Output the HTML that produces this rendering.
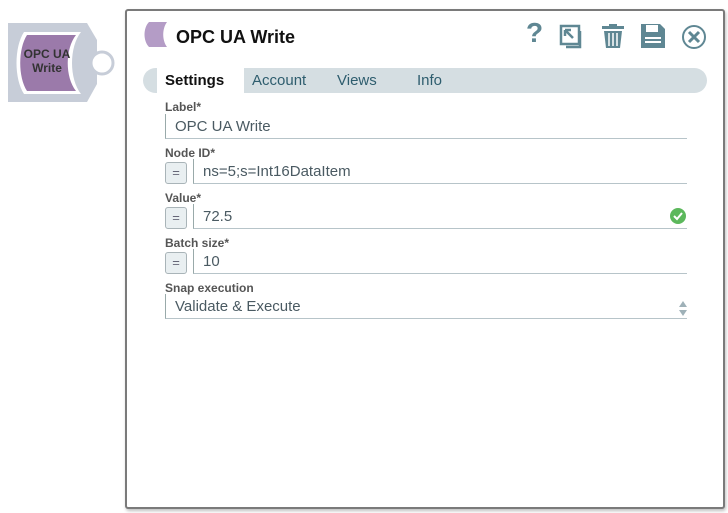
<!DOCTYPE html>
<html><head><meta charset="utf-8"><style>
body{margin:0;width:728px;height:513px;background:#fff;font-family:"Liberation Sans",sans-serif;position:relative;overflow:hidden}
.abs{position:absolute}
.panel{left:125px;top:9px;width:596px;height:496px;border:2px solid #7a7a7a;border-radius:3px;box-shadow:1px 2px 3px rgba(0,0,0,.25);background:#fff}
.lbl{position:absolute;left:165px;font-size:12px;font-weight:bold;color:#555}
.inp{position:absolute;border-left:1px solid #9aa;border-bottom:1px solid #b7c4c9;font-size:15px;color:#4a5a62;padding-left:9px;box-sizing:border-box;height:25px;line-height:25px}
.eq{position:absolute;left:165px;width:22px;height:22px;border:1px solid #a9b4b8;border-radius:3px;background:#e9eff1;box-sizing:border-box;color:#667;font-size:13px;text-align:center;line-height:19px}
.tab{position:absolute;top:72px;font-size:15px;color:#2e5d6e}
</style></head><body>
<svg class="abs" style="left:7px;top:22px" width="110" height="82">
<polygon points="1,1 80,1 90,18 90,62 80,80 1,80" fill="#c7cdd8"/>
<path d="M17,10 H74 C62,25 62,57 74,72 H17 C7,57 7,25 17,10Z" fill="#fff"/>
<path d="M20,13 H69 C58,27 58,55 69,69 H20 C11,55 11,27 20,13Z" fill="#9b7aaa"/>
<circle cx="95" cy="41" r="11" fill="#fff" stroke="#c7cdd8" stroke-width="3"/>
<text x="40" y="36" font-size="12" font-weight="bold" text-anchor="middle" fill="#333" font-family="Liberation Sans">OPC UA</text>
<text x="40" y="50" font-size="12" font-weight="bold" text-anchor="middle" fill="#333" font-family="Liberation Sans">Write</text>
</svg>
<div class="abs panel"></div>
<svg class="abs" style="left:143px;top:21px" width="26" height="27"><path d="M6,1 H24 C19,8 19,19 24,26 H6 C0,20 0,7 6,1Z" fill="#b49cc6"/></svg>
<div class="abs" style="left:176px;top:27px;font-size:18px;font-weight:bold;color:#111">OPC UA Write</div>
<div class="abs" style="left:526px;top:17px;font-size:28px;font-weight:bold;color:#5f8793">?</div>
<svg class="abs" style="left:558px;top:23px" width="28" height="28" fill="none" stroke="#5f8793" stroke-width="2.5"><rect x="3" y="3" width="18" height="18"/><path d="M22,8 V24 H8"/><path d="M7,7 L15,15 M7,7 H13 M7,7 V13"/></svg>
<svg class="abs" style="left:600px;top:23px" width="26" height="26" fill="#5f8793"><rect x="2" y="3" width="22" height="3"/><rect x="9" y="1" width="8" height="3"/><path d="M4,8 H22 L20,25 H6Z"/><path d="M9,10 V23 M13,10 V23 M17,10 V23" stroke="#fff" stroke-width="1.5"/></svg>
<svg class="abs" style="left:640px;top:23px" width="26" height="26"><path d="M1,1 H20 L25,6 V25 H1Z" fill="#5f8793"/><rect x="6" y="2" width="12" height="7" fill="#fff"/><rect x="5" y="14" width="16" height="2" fill="#fff"/><rect x="5" y="18" width="16" height="2" fill="#fff"/></svg>
<svg class="abs" style="left:682px;top:25px" width="26" height="26" fill="none" stroke="#5f8793" stroke-width="2"><circle cx="12" cy="12" r="11"/><path d="M7,7 L17,17 M17,7 L7,17" stroke-width="3"/></svg>
<div class="abs" style="left:143px;top:68px;width:564px;height:25px;background:#d5dee2;border-radius:13px"></div>
<div class="abs" style="left:157px;top:68px;width:87px;height:25px;background:#fff"></div>
<div class="tab" style="left:165px;font-weight:bold;color:#111">Settings</div>
<div class="tab" style="left:252px">Account</div>
<div class="tab" style="left:337px">Views</div>
<div class="tab" style="left:417px">Info</div>
<div class="lbl" style="top:100px">Label*</div>
<div class="inp" style="left:165px;top:114px;width:522px">OPC UA Write</div>
<div class="lbl" style="top:146px">Node ID*</div>
<div class="eq" style="top:162px">=</div>
<div class="inp" style="left:193px;top:159px;width:494px">ns=5;s=Int16DataItem</div>
<div class="lbl" style="top:191px">Value*</div>
<div class="eq" style="top:207px">=</div>
<div class="inp" style="left:193px;top:204px;width:494px">72.5</div>
<svg class="abs" style="left:669px;top:207px" width="18" height="18"><circle cx="9" cy="9" r="8" fill="#5cb85c"/><path d="M5,9 L8,12 L13,6" stroke="#fff" stroke-width="2" fill="none"/></svg>
<div class="lbl" style="top:236px">Batch size*</div>
<div class="eq" style="top:252px">=</div>
<div class="inp" style="left:193px;top:249px;width:494px">10</div>
<div class="lbl" style="top:281px">Snap execution</div>
<div class="inp" style="left:165px;top:294px;width:522px">Validate &amp; Execute</div>
<svg class="abs" style="left:678px;top:300px" width="10" height="18" fill="#9fb1b8"><path d="M1,7 L5,1 L9,7Z M1,10 L5,16 L9,10Z"/></svg>
</body></html>
